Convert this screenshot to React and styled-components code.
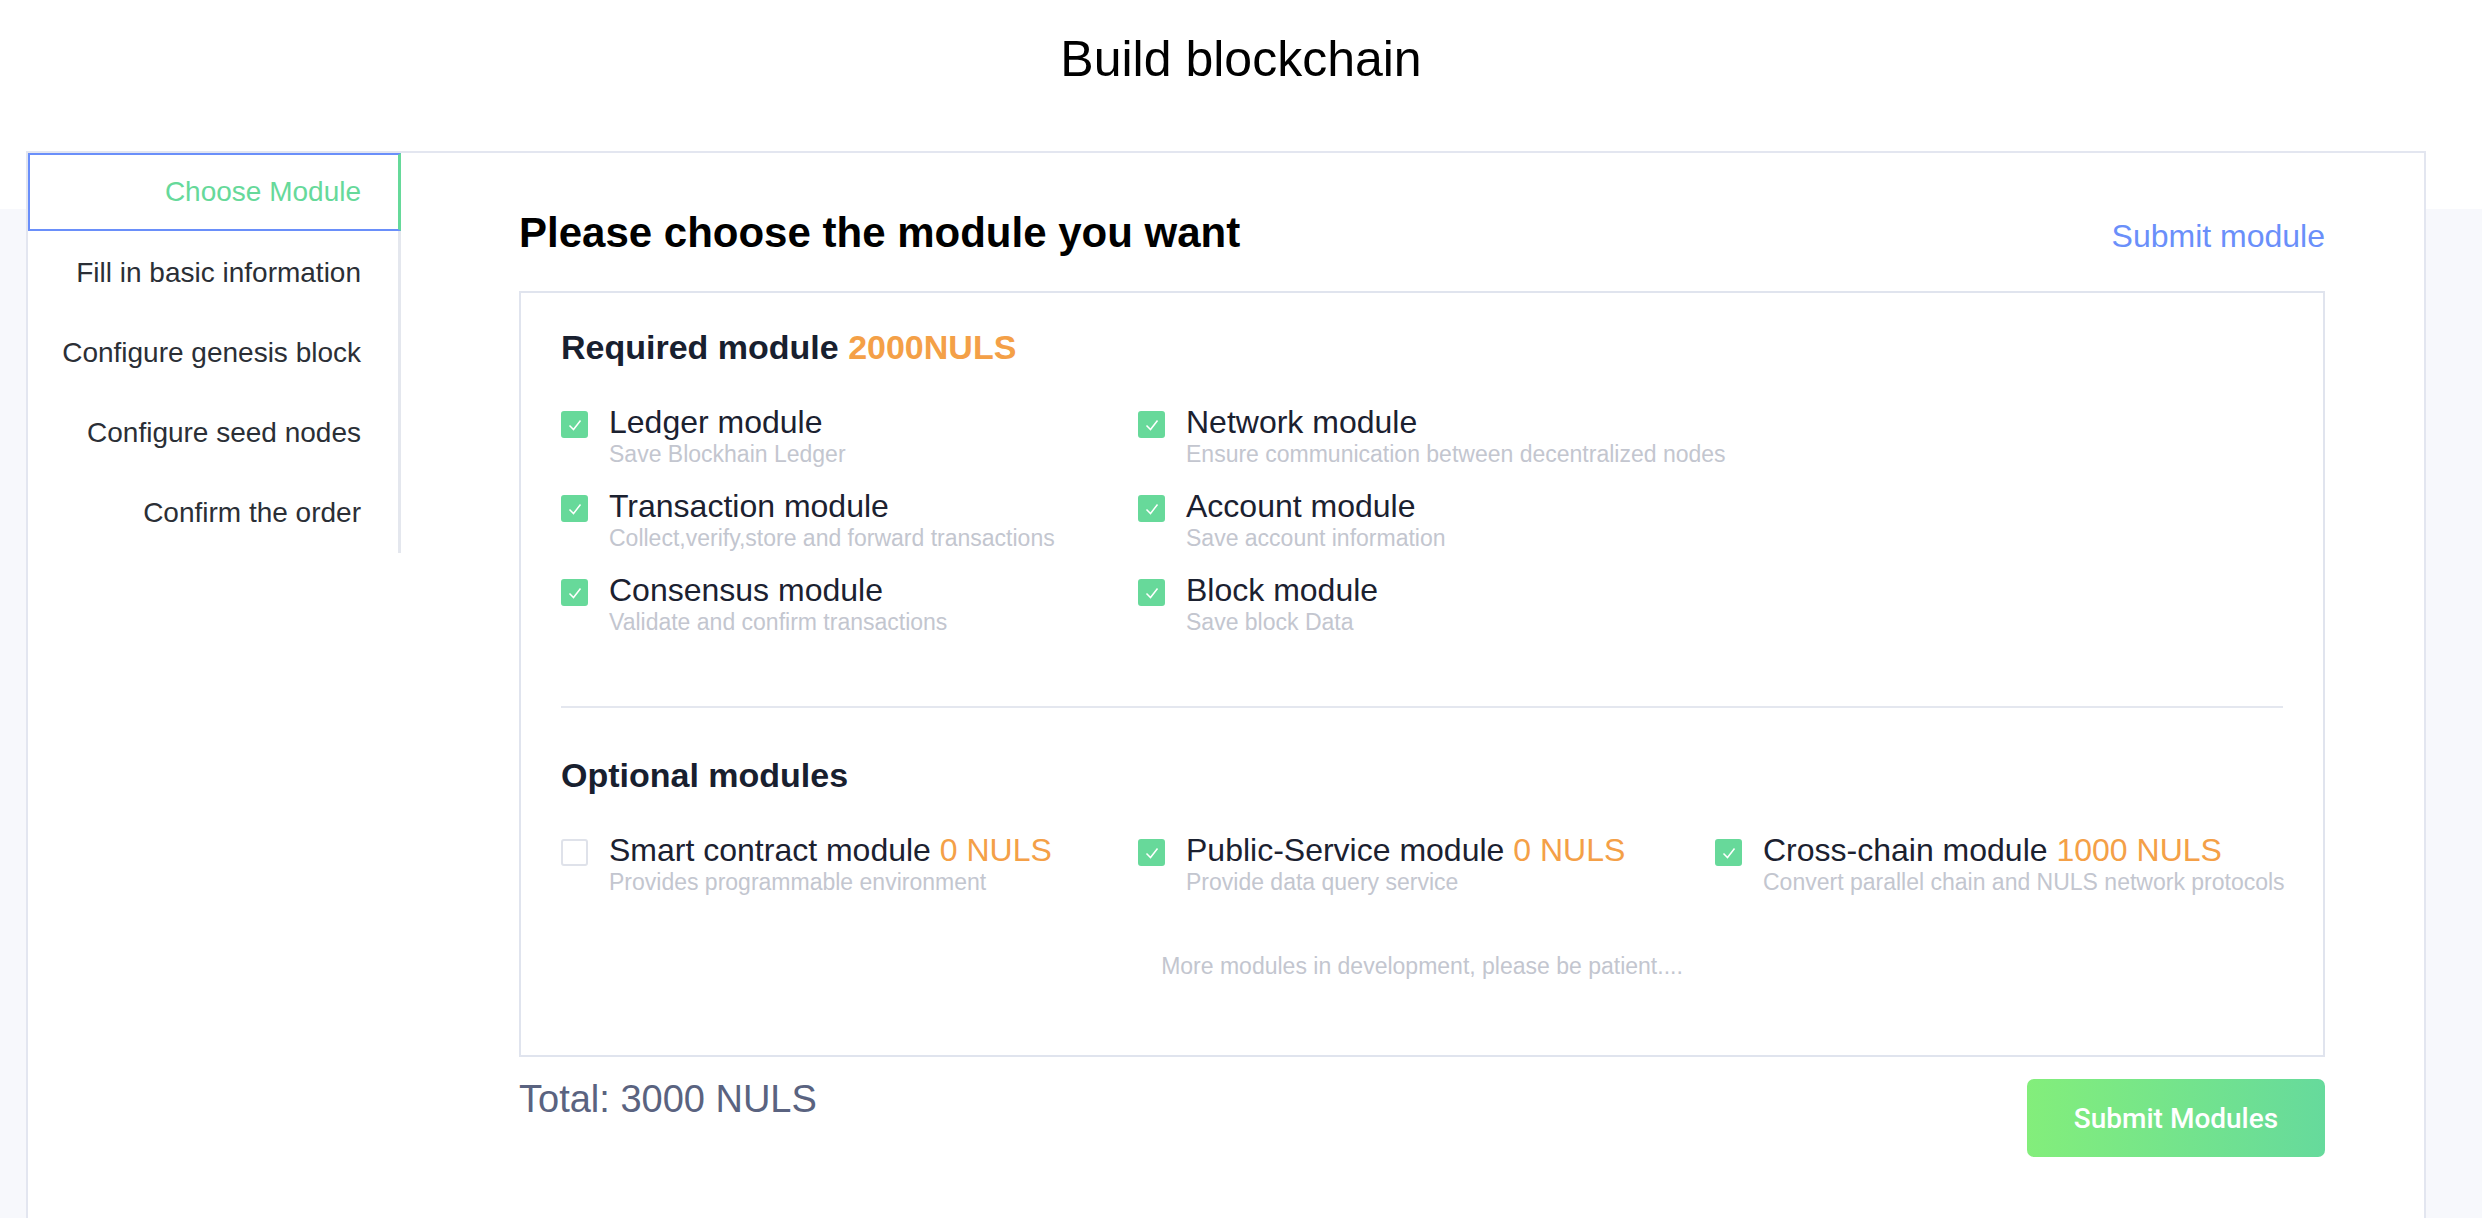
import styled, { createGlobalStyle } from 'styled-components'

const GlobalStyle = createGlobalStyle`
  html, body {
    margin: 0;
    padding: 0;
    background: #f7f8fc;
    font-family: "Liberation Sans", Arial, sans-serif;
  }
  * { box-sizing: border-box; }
`

const steps = [
  'Choose Module',
  'Fill in basic information',
  'Configure genesis block',
  'Configure seed nodes',
  'Confirm the order',
]

const required = [
  { name: 'Ledger module', desc: 'Save Blockhain Ledger' },
  { name: 'Network module', desc: 'Ensure communication between decentralized nodes' },
  { name: 'Transaction module', desc: 'Collect,verify,store and forward transactions' },
  { name: 'Account module', desc: 'Save account information' },
  { name: 'Consensus module', desc: 'Validate and confirm transactions' },
  { name: 'Block module', desc: 'Save block Data' },
]

const optional = [
  { name: 'Smart contract module', price: '0 NULS', desc: 'Provides programmable environment', checked: false },
  { name: 'Public-Service module', price: '0 NULS', desc: 'Provide data query service', checked: true },
  { name: 'Cross-chain module', price: '1000 NULS', desc: 'Convert parallel chain and NULS network protocols', checked: true },
]

function Check({ checked }) {
  return (
    <Box checked={checked}>
      {checked && (
        <svg width="18" height="18" viewBox="0 0 18 18">
          <polyline points="3.5,9.5 7.5,13.5 14.5,4.5" fill="none" stroke="#fff" strokeWidth="1.5" />
        </svg>
      )}
    </Box>
  )
}

function ModuleItem({ item }) {
  return (
    <Item>
      <Check checked={item.checked !== false} />
      <div>
        <Label>
          {item.name}
          {item.price && <Price> {item.price}</Price>}
        </Label>
        <Desc>{item.desc}</Desc>
      </div>
    </Item>
  )
}

function App() {
  return (
    <>
      <GlobalStyle />
      <Header>
        <PageTitle>Build blockchain</PageTitle>
      </Header>
      <Panel>
        <Sidebar>
          {steps.map((s, i) => (
            <Step key={s} active={i === 0}>{s}</Step>
          ))}
        </Sidebar>
        <Main>
          <TopRow>
            <Heading>Please choose the module you want</Heading>
            <LinkText>Submit module</LinkText>
          </TopRow>
          <ModuleBox>
            <SectionTitle>
              Required module <Price>2000NULS</Price>
            </SectionTitle>
            <Grid cols={2}>
              {required.map(m => (
                <ModuleItem key={m.name} item={m} />
              ))}
            </Grid>
            <Divider />
            <SectionTitle>Optional modules</SectionTitle>
            <Grid cols={3}>
              {optional.map(m => (
                <ModuleItem key={m.name} item={m} />
              ))}
            </Grid>
            <Note>More modules in development, please be patient....</Note>
          </ModuleBox>
          <Footer>
            <Total>Total: 3000 NULS</Total>
            <SubmitButton>Submit Modules</SubmitButton>
          </Footer>
        </Main>
      </Panel>
    </>
  )
}

const Header = styled.div`
  height: 209px;
  background: #fff;
  display: flex;
  justify-content: center;
  padding-top: 29px;
`
const PageTitle = styled.h1`
  margin: 0;
  font-weight: 400;
  font-size: 50px;
  line-height: 60px;
  color: #000;
`
const Panel = styled.div`
  display: flex;
  align-items: flex-start;
  margin: -58px 56px 0 26px;
  background: #fff;
  border: 2px solid #e3e6f0;
  border-bottom: none;
  min-height: 1120px;
`
const Sidebar = styled.div`
  flex: none;
  width: 373px;
  border-right: 3px solid #e4e7ee;
  display: flex;
  flex-direction: column;
`
const Step = styled.div`
  display: flex;
  align-items: center;
  justify-content: flex-end;
  padding-right: 37px;
  margin-right: -3px;
  font-size: 28px;
  color: ${p => (p.active ? '#66d99a' : '#2b2f36')};
  border: 2px solid ${p => (p.active ? '#6a8ffa' : 'transparent')};
  border-right: 3px solid ${p => (p.active ? '#66d99a' : 'transparent')};
  border-left-width: ${p => (p.active ? '2px' : '0')};
  height: ${p => (p.active ? '78px' : '80px')};
  margin-bottom: ${p => (p.active ? '2px' : '0')};
`
const Main = styled.div`
  flex: 1;
  min-width: 0;
  padding: 54px 99px 0 118px;
`
const TopRow = styled.div`
  display: flex;
  justify-content: space-between;
  align-items: baseline;
`
const Heading = styled.h2`
  margin: 0;
  font-size: 42px;
  line-height: 52px;
  font-weight: 700;
  color: #000;
`
const LinkText = styled.span`
  font-size: 32px;
  color: #6a8ffa;
  cursor: pointer;
`
const ModuleBox = styled.div`
  margin-top: 32px;
  border: 2px solid #e0e4ee;
  padding: 34px 40px 75px 40px;
`
const SectionTitle = styled.div`
  font-size: 34px;
  line-height: 40px;
  font-weight: 700;
  color: #18202f;
`
const Price = styled.span`
  color: #f4a047;
`
const Grid = styled.div`
  display: grid;
  grid-template-columns: ${p => (p.cols === 3 ? '577px 577px 1fr' : '577px 577px')};
  row-gap: 20px;
  margin-top: 37px;
`
const Item = styled.div`
  display: flex;
  align-items: flex-start;
  gap: 21px;
`
const Box = styled.div`
  flex: none;
  width: 27px;
  height: 27px;
  margin-top: 7px;
  border-radius: 3px;
  display: flex;
  align-items: center;
  justify-content: center;
  background: ${p => (p.checked ? '#67d99a' : '#fff')};
  border: 2px solid ${p => (p.checked ? '#67d99a' : '#dfe2ea')};
`
const Label = styled.div`
  font-size: 32px;
  line-height: 36px;
  color: #1b2130;
  white-space: nowrap;
`
const Desc = styled.div`
  font-size: 23px;
  line-height: 28px;
  color: #c3c6cf;
  white-space: nowrap;
`
const Divider = styled.div`
  height: 2px;
  background: #e4e7ef;
  margin: 70px 0 47px;
`
const Note = styled.div`
  margin-top: 56px;
  text-align: center;
  font-size: 23px;
  line-height: 28px;
  color: #c3c6cf;
`
const Footer = styled.div`
  display: flex;
  justify-content: space-between;
  align-items: flex-start;
  margin-top: 20px;
`
const Total = styled.div`
  font-size: 38px;
  line-height: 44px;
  color: #5a6380;
`
const SubmitButton = styled.button`
  width: 298px;
  height: 78px;
  margin-top: 2px;
  border: none;
  border-radius: 7px;
  background: linear-gradient(90deg, #83ee7b 0%, #66da9c 100%);
  color: #fff;
  font-family: Roboto, "Liberation Sans", sans-serif;
  font-weight: 500;
  font-size: 28px;
  cursor: pointer;
`

export default App
